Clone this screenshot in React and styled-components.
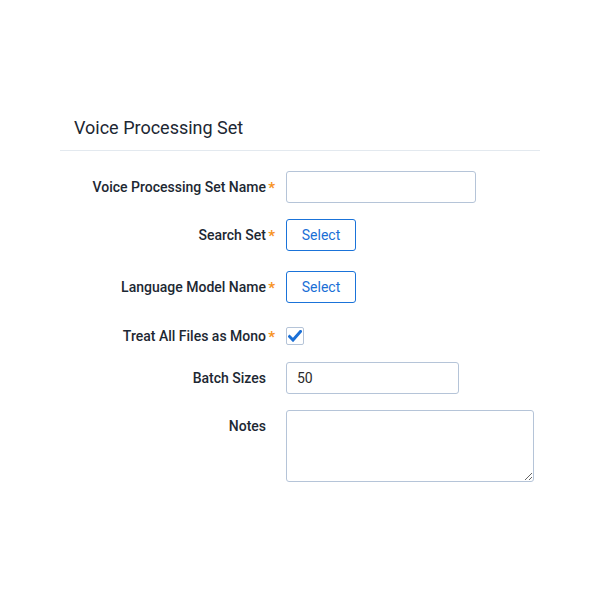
import React from "react";
import styled, { createGlobalStyle } from "styled-components";

const GlobalStyle = createGlobalStyle`
  body {
    margin: 0;
    background: #ffffff;
    font-family: Roboto, "Liberation Sans", Arial, sans-serif;
  }
`;

const Page = styled.div`
  padding: 107px 60px 0;
`;

const Header = styled.div`
  padding: 10px 14px 12px;
  font-size: 18px;
  line-height: 21px;
  color: #1c2733;
  border-bottom: 1px solid #e3e9ef;
`;

const Form = styled.div`
  padding-top: 20px;
`;

const Row = styled.div`
  display: flex;
  align-items: ${({ $top }) => ($top ? "flex-start" : "center")};
  column-gap: 11px;
  margin-bottom: ${({ $gap }) => $gap || 0}px;
`;

const Label = styled.label`
  position: relative;
  width: 215px;
  flex: none;
  box-sizing: border-box;
  padding-right: 9px;
  text-align: right;
  font-size: 14px;
  font-weight: 500;
  line-height: 32px;
  color: #1d2833;
`;

const Required = styled.span`
  position: absolute;
  right: 0;
  top: 1px;
  color: #f7931e;
  font-size: 15px;
  font-weight: 700;
`;

const TextInput = styled.input`
  box-sizing: border-box;
  width: ${({ $w }) => $w}px;
  height: 32px;
  padding: 0 10px;
  border: 1px solid #b5c4d8;
  border-radius: 3px;
  font-family: inherit;
  font-size: 14px;
  color: #2b2b2b;
  outline: none;
`;

const TextArea = styled.textarea`
  box-sizing: border-box;
  width: 248px;
  height: 72px;
  padding: 6px 10px;
  border: 1px solid #b5c4d8;
  border-radius: 3px;
  font-family: inherit;
  font-size: 14px;
  outline: none;
  margin: 0;
`;

const SelectButton = styled.button`
  box-sizing: border-box;
  width: 70px;
  height: 32px;
  background: #ffffff;
  border: 1px solid #1a73d9;
  border-radius: 3px;
  color: #1a6fd6;
  font-family: inherit;
  font-size: 14px;
  cursor: pointer;
`;

const CheckBox = styled.div`
  box-sizing: border-box;
  width: 18px;
  height: 18px;
  border: 1px solid #b5c4d8;
  border-radius: 2px;
  display: flex;
  align-items: center;
  justify-content: center;
`;

const FieldLabel = ({ children, required }) => (
  <Label>
    {children}
    {required && <Required>*</Required>}
  </Label>
);

export default function App() {
  return (
    <>
      <GlobalStyle />
      <Page>
        <Header>Voice Processing Set</Header>
        <Form>
          <Row $gap={16}>
            <FieldLabel required>Voice Processing Set Name</FieldLabel>
            <TextInput $w={190} />
          </Row>
          <Row $gap={20}>
            <FieldLabel required>Search Set</FieldLabel>
            <SelectButton>Select</SelectButton>
          </Row>
          <Row $gap={17}>
            <FieldLabel required>Language Model Name</FieldLabel>
            <SelectButton>Select</SelectButton>
          </Row>
          <Row $gap={10}>
            <FieldLabel required>Treat All Files as Mono</FieldLabel>
            <CheckBox>
              <svg width="14" height="12" viewBox="0 0 14 12">
                <path
                  d="M1.5 6.5 L5 10 L12.5 1.5"
                  fill="none"
                  stroke="#1a6fd6"
                  strokeWidth="3"
                  strokeLinecap="square"
                />
              </svg>
            </CheckBox>
          </Row>
          <Row $gap={16}>
            <FieldLabel>Batch Sizes</FieldLabel>
            <TextInput $w={173} defaultValue="50" />
          </Row>
          <Row $top>
            <FieldLabel>Notes</FieldLabel>
            <TextArea />
          </Row>
        </Form>
      </Page>
    </>
  );
}
